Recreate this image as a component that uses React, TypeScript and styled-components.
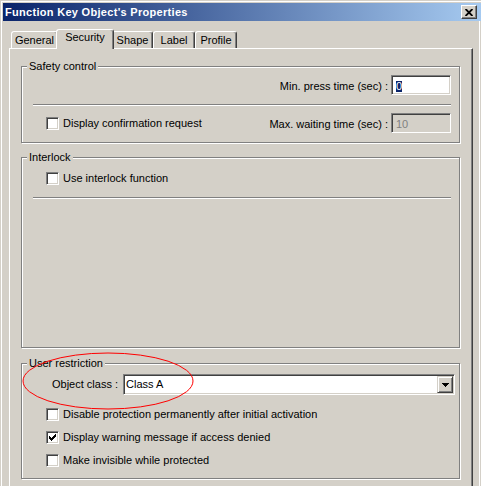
import React from "react";
import styled, { createGlobalStyle } from "styled-components";

const FACE = "#d4d0c8";

const GlobalStyle = createGlobalStyle`
  html, body {
    margin: 0;
    padding: 0;
    background: ${FACE};
  }
  body {
    font-family: "Liberation Sans", Arial, sans-serif;
    font-size: 11px;
  }
`;

const Screen = styled.div`
  position: relative;
  width: 481px;
  height: 486px;
  overflow: hidden;
  background: ${FACE};
  color: #000;
  font-family: "Liberation Sans", Arial, sans-serif;
  font-size: 11px;
  line-height: 13px;
`;

const Window = styled.div`
  box-sizing: border-box;
  height: 100%;
  padding: 3px 0 0 3px;
  box-shadow: inset 1px 1px 0 ${FACE}, inset 2px 2px 0 #fff;
`;

const TitleBar = styled.div`
  height: 18px;
  display: flex;
  align-items: center;
  justify-content: space-between;
  padding: 0 4px 0 2px;
  background: linear-gradient(to right, #0a246a, #a6caf0);
  color: #fff;
  font-weight: bold;
  letter-spacing: 0.3px;
`;

const CaptionButton = styled.div`
  box-sizing: border-box;
  width: 16px;
  height: 14px;
  display: flex;
  align-items: center;
  justify-content: center;
  background: ${FACE};
  border: 1px solid;
  border-color: #fff #404040 #404040 #fff;
  box-shadow: inset -1px -1px 0 #808080;
`;

const Body = styled.div`
  padding: 8px 0 0 6px;
  margin-right: 1px;
  border-right: 1px solid #fff;
  height: 100%;
`;

const TabStrip = styled.div`
  display: flex;
  align-items: flex-end;
  height: 19px;
  padding-left: 2px;
`;

const Tab = styled.div<{ $w: number; $active?: boolean }>`
  box-sizing: border-box;
  position: relative;
  z-index: ${(p) => (p.$active ? 2 : 1)};
  width: ${(p) => (p.$active ? p.$w + 4 : p.$w)}px;
  height: ${(p) => (p.$active ? 20 : 17)}px;
  margin: 0 ${(p) => (p.$active ? -2 : 0)}px ${(p) => (p.$active ? -1 : 0)}px;
  padding-top: ${(p) => (p.$active ? 1 : 2)}px;
  text-align: center;
  background: ${FACE};
  border: 1px solid;
  border-bottom: none;
  border-color: #fff #404040 transparent #fff;
  border-radius: 3px 3px 0 0;
  box-shadow: inset -1px 0 0 #808080;
`;

const TabPanel = styled.div`
  box-sizing: border-box;
  width: 464px;
  min-height: 470px;
  padding: 17px 12px 30px 11px;
  border-top: 1px solid #fff;
  border-left: 1px solid #fff;
  border-right: 1px solid #404040;
  box-shadow: inset -1px 0 0 #808080;
`;

const GroupBox = styled.div<{ $h: number; $mt: number }>`
  box-sizing: border-box;
  height: ${(p) => p.$h}px;
  margin-top: ${(p) => p.$mt}px;
  padding: 0 8px 0 11px;
  display: flex;
  flex-direction: column;
  border: 1px solid #808080;
  box-shadow: inset 1px 1px 0 #fff, 1px 1px 0 #fff;
`;

const Legend = styled.div`
  align-self: flex-start;
  height: 13px;
  margin: -7px 0 0 -6px;
  padding: 0 2px;
  background: ${FACE};
`;

const Row = styled.div<{ $mt: number; $end?: boolean }>`
  display: flex;
  align-items: center;
  justify-content: ${(p) => (p.$end ? "flex-end" : "space-between")};
  margin-top: ${(p) => p.$mt}px;
`;

const FieldLabel = styled.div`
  display: flex;
  align-items: center;
  gap: 3px;
`;

const LabelText = styled.span`
  padding-top: 2px;
`;

const NumberInput = styled.div<{ $disabled?: boolean }>`
  box-sizing: border-box;
  width: 60px;
  height: 20px;
  display: flex;
  align-items: center;
  padding: 2px 0 0 4px;
  background: ${(p) => (p.$disabled ? FACE : "#fff")};
  color: ${(p) => (p.$disabled ? "#808080" : "#000")};
  border: 1px solid;
  border-color: #808080 #fff #fff #808080;
  box-shadow: inset 1px 1px 0 #404040, inset -1px -1px 0 ${FACE};
`;

const Selected = styled.span`
  display: inline-block;
  height: 11px;
  line-height: 11px;
  background: #0a246a;
  color: #fff;
`;

const Separator = styled.div<{ $mt: number }>`
  height: 0;
  margin-top: ${(p) => p.$mt}px;
  border-top: 1px solid #808080;
  border-bottom: 1px solid #fff;
`;

const CheckRow = styled.div<{ $mt?: number }>`
  display: flex;
  align-items: center;
  gap: 4px;
  height: 13px;
  margin: ${(p) => p.$mt || 0}px 0 0 13px;
`;

const CheckBox = styled.div`
  box-sizing: border-box;
  width: 13px;
  height: 13px;
  display: flex;
  align-items: center;
  justify-content: center;
  background: #fff;
  border: 1px solid;
  border-color: #808080 #fff #fff #808080;
  box-shadow: inset 1px 1px 0 #404040, inset -1px -1px 0 ${FACE};
`;

const ComboRow = styled.div`
  display: flex;
  align-items: center;
  margin-top: 4px;
  padding-left: 19px;
`;

const ComboLabel = styled.span`
  width: 71px;
  flex: none;
`;

const Combo = styled.div`
  box-sizing: border-box;
  flex: none;
  width: 332px;
  height: 21px;
  display: flex;
  align-items: center;
  justify-content: space-between;
  padding-left: 2px;
  background: #fff;
  border: 1px solid;
  border-color: #808080 #fff #fff #808080;
  box-shadow: inset 1px 1px 0 #404040, inset -1px -1px 0 ${FACE};
`;

const DropButton = styled.div`
  box-sizing: border-box;
  width: 16px;
  height: 17px;
  margin-right: 1px;
  display: flex;
  align-items: center;
  justify-content: center;
  background: ${FACE};
  border: 1px solid;
  border-color: ${FACE} #404040 #404040 ${FACE};
  box-shadow: inset 1px 1px 0 #fff, inset -1px -1px 0 #808080;
`;

const Annotation = styled.svg`
  position: absolute;
  left: 0;
  top: 0;
  pointer-events: none;
`;

const tabs = [
  { label: "General", w: 47 },
  { label: "Security", w: 54, active: true },
  { label: "Shape", w: 41 },
  { label: "Label", w: 42 },
  { label: "Profile", w: 42 },
];

function Check({ checked, label, mt }: { checked?: boolean; label: string; mt?: number }) {
  return (
    <CheckRow $mt={mt}>
      <CheckBox>
        {checked && (
          <svg width="7" height="7" viewBox="0 0 7 7" shapeRendering="crispEdges">
            <polygon points="0,2 2,4 6,0 7,0 7,2 2,7 0,5" fill="#000" />
          </svg>
        )}
      </CheckBox>
      <span>{label}</span>
    </CheckRow>
  );
}

export default function App() {
  return (
    <Screen>
      <GlobalStyle />
      <Window>
        <TitleBar>
          <span>Function Key Object's Properties</span>
          <CaptionButton>
            <svg width="8" height="7" viewBox="0 0 8 7">
              <path d="M0.5 0 L7.5 7 M7.5 0 L0.5 7" stroke="#000" strokeWidth="1.9" />
            </svg>
          </CaptionButton>
        </TitleBar>
        <Body>
          <TabStrip>
            {tabs.map((t) => (
              <Tab key={t.label} $w={t.w} $active={t.active}>
                {t.label}
              </Tab>
            ))}
          </TabStrip>
          <TabPanel>
            <GroupBox $h={77} $mt={0}>
              <Legend>Safety control</Legend>
              <Row $mt={2} $end>
                <FieldLabel>
                  <LabelText>Min. press time (sec) :</LabelText>
                  <NumberInput>
                    <Selected>0</Selected>
                  </NumberInput>
                </FieldLabel>
              </Row>
              <Separator $mt={9} />
              <Row $mt={7}>
                <Check label="Display confirmation request" />
                <FieldLabel>
                  <LabelText>Max. waiting time (sec) :</LabelText>
                  <NumberInput $disabled>10</NumberInput>
                </FieldLabel>
              </Row>
            </GroupBox>

            <GroupBox $h={191} $mt={14}>
              <Legend>Interlock</Legend>
              <Check label="Use interlock function" mt={8} />
              <Separator $mt={12} />
            </GroupBox>

            <GroupBox $h={116} $mt={15}>
              <Legend>User restriction</Legend>
              <ComboRow>
                <ComboLabel>Object class :</ComboLabel>
                <Combo>
                  <span>Class A</span>
                  <DropButton>
                    <svg width="7" height="4" viewBox="0 0 7 4" shapeRendering="crispEdges">
                      <polygon points="0,0 7,0 3.5,4" fill="#000" />
                    </svg>
                  </DropButton>
                </Combo>
              </ComboRow>
              <Check label="Disable protection permanently after initial activation" mt={13} />
              <Check label="Display warning message if access denied" checked mt={10} />
              <Check label="Make invisible while protected" mt={10} />
            </GroupBox>
          </TabPanel>
        </Body>
      </Window>
      <Annotation width="481" height="486" viewBox="0 0 481 486">
        <ellipse cx="108" cy="381" rx="85" ry="28" fill="none" stroke="#ff0000" strokeWidth="1" />
      </Annotation>
    </Screen>
  );
}
